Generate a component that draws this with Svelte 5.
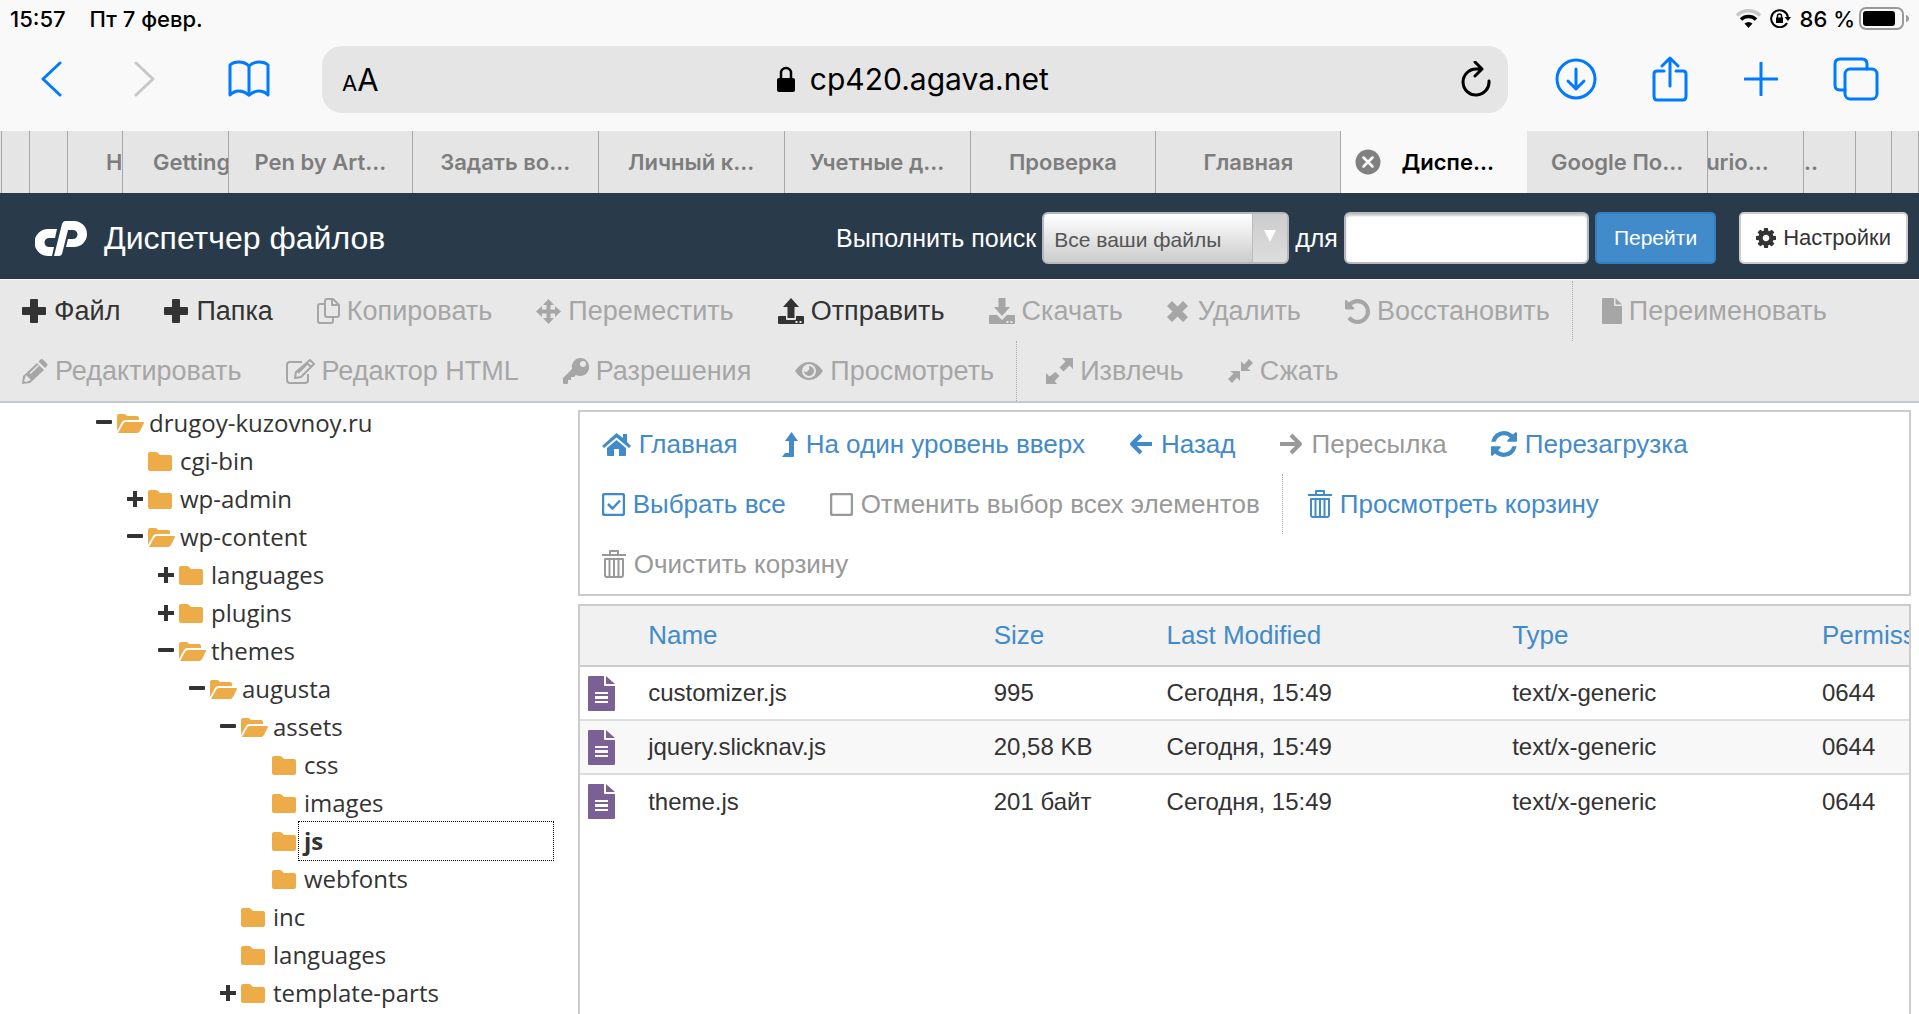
<script lang="ts">
	interface Glyph {
		w: number;
		h: number;
		box?: string;
		fill?: string;
		line?: string;
		lw?: number;
	}
	interface Action {
		icon: string;
		label: string;
		on?: boolean;
		divided?: boolean;
	}
	interface Tab {
		title: string;
		size: number;
		lead?: number;
		active?: boolean;
	}

	// Glyphs are drawn on a pixel grid of w × h unless they bring their own box.
	const glyphs: Record<string, Glyph> = {
		plus: { w: 25, h: 24, fill: 'M9 0h6q1 0 1 1v7h7q1 0 1 1v6q0 1-1 1h-7v7q0 1-1 1H9q-1 0-1-1v-7H1q-1 0-1-1V9q0-1 1-1h7V1q0-1 1-1z' },
		copy: {
			w: 23,
			h: 26,
			line: 'M15 1v6h7M10 1h6l6 6v10q0 2-2 2H10q-2 0-2-2V3q0-2 2-2zM8 6H3Q1 6 1 8v15q0 2 2 2h11q2 0 2-2v-4',
			lw: 2
		},
		move: {
			w: 25,
			h: 25,
			fill: 'M12.5 0l5.5 6h-3.5v4.5H19V7l6 5.5-6 5.5v-3.5h-4.5V19H18l-5.5 6L7 19h3.5v-4.5H6V18l-6-5.5L6 7v3.5h4.5V6H7z'
		},
		upload: {
			w: 26,
			h: 26,
			fill: 'M13 0l8 9h-4.5v11h-7V9H5zM1 18h7v3q0 1 1 1h8q1 0 1-1v-3h7q1 0 1 1v6q0 1-1 1H1q-1 0-1-1v-6q0-1 1-1zm16.5 5v2h2v-2zm4 0v2h2v-2z'
		},
		download: {
			w: 26,
			h: 26,
			fill: 'M9.5 0h7v9H21l-8 9-8-9h4.5zM1 17h7l5 5 5-5h7q1 0 1 1v7q0 1-1 1H1q-1 0-1-1v-7q0-1 1-1zm16.5 6v2h2v-2zm4 0v2h2v-2z'
		},
		cross: { w: 24, h: 21, box: '0 0 24 21', fill: 'M5 0l5.5 5.5L16 0l5 5-5.5 5.5L21 16l-5 5-5.5-5.5L5 21l-5-5 5.5-5.5L0 5z' },
		undo: {
			w: 25,
			h: 25,
			box: '128 128 1536 1536',
			fill: 'M1664 896q0 156-61 298t-164 245-245 164-298 61q-172 0-327-72.5t-264-204.5q-7-10-6.5-22.5t8.5-20.5l137-138q10-9 25-9 16 2 23 12 73 95 179 147t225 52q104 0 198.5-40.5t163.5-109.5 109.5-163.5 40.5-198.5-40.5-198.5-109.5-163.5-163.5-109.5-198.5-40.5q-98 0-188 35.5t-160 101.5l137 138q31 30 14 69-17 40-59 40h-448q-26 0-45-19t-19-45v-448q0-42 40-59 39-17 69 14l130 129q107-101 244.5-156.5t284.5-55.5q156 0 298 61t245 164 164 245 61 298z'
		},
		file: { w: 20, h: 26, fill: 'M1 0h11v7q0 1 1 1h7v17q0 1-1 1H1q-1 0-1-1V1q0-1 1-1zM13.5 0 20 6.5h-6.5z' },
		pencil: {
			w: 26,
			h: 25,
			fill: 'M15 4l7 7L8 24l-8 1 1-8zM4 16l-2 6 2 1 5-2zM7.5 14l1 1L17 7l-1-1zM16.5 2.5l2-2q1-1 2.5 0l4 4q1 1 0 2.5l-2 2z'
		},
		edit: {
			w: 29,
			h: 26,
			line: 'M16 4H4Q1 4 1 7v15q0 3 3 3h15q3 0 3-3v-6M24 2l4 4-13 13-6 1 1-6zM21 5l4 4M12 15l10-10',
			lw: 2
		},
		key: {
			w: 26,
			h: 26,
			fill: 'M17 0a9 9 0 1 1-4 17l-2 2H8v3H5v3q0 1-1 1H1q-1 0-1-1v-5l9-9a9 9 0 0 1 8-11zm3 3a3 3 0 1 0 0 6 3 3 0 0 0 0-6z'
		},
		eye: {
			w: 28,
			h: 18,
			fill: 'M0 9Q6 0 14 0t14 9q-6 9-14 9T0 9zM14 2a7 7 0 1 0 0 14 7 7 0 0 0 0-14zm0 2a5 5 0 1 1-5 5q2 2 4 0t1-5z'
		},
		expand: { w: 27, h: 26, fill: 'M16 0h11v11l-3.5-3.5-6 6-4-4 6-6zM9.5 14l4 4-5 5 2.5 3H0V15l3.5 3.5z' },
		compress: { w: 25, h: 24, fill: 'M21 0l4 4-5.5 5.5L23 12H13V2l3 3.5zM2 12h10v10l-3-3.5L4 24l-4-4 5.5-5.5z' },
		home: {
			w: 29,
			h: 23,
			fill: 'M14.5 7 24 15v7q0 1-1 1h-6v-7h-5v7H6q-1 0-1-1v-7zM14.5 0 21 5V1h4v8l4 4-2 2L14.5 4.5 2 15l-2-2z'
		},
		up: { w: 16, h: 25, fill: 'M9.5 0l6.5 9h-4v15q0 1-1 1H0l3-4h4V9H3z' },
		back: { w: 24, h: 22, line: 'M12 2l-9 9 9 9M4 11h19', lw: 4 },
		forward: { w: 24, h: 22, line: 'M12 2l9 9-9 9M1 11h19', lw: 4 },
		refresh: {
			w: 26,
			h: 26,
			box: '128 128 1536 1536',
			fill: 'M1639 1056q0 5-1 7-64 268-268 434.5t-478 166.5q-146 0-282.5-55t-243.5-157l-129 129q-19 19-45 19t-45-19-19-45v-448q0-26 19-45t45-19h448q26 0 45 19t19 45-19 45l-137 137q71 66 161 102t187 36q134 0 250-65t186-179q11-17 53-117 8-23 30-23h192q13 0 22.5 9.5t9.5 22.5zm25-800v448q0 26-19 45t-45 19h-448q-26 0-45-19t-19-45 19-45l138-138q-148-137-349-137-134 0-250 65t-186 179q-11 17-53 117-8 23-30 23h-199q-13 0-22.5-9.5t-9.5-22.5v-7q65-268 270-434.5t480-166.5q146 0 284 55.5t245 156.5l130-129q19-19 45-19t45 19 19 45z'
		},
		checked: { w: 23, h: 23, line: 'M3 1h17q2 0 2 2v17q0 2-2 2H3q-2 0-2-2V3q0-2 2-2zM6 11l4.5 4.5L18 7.5', lw: 2.5 },
		unchecked: { w: 23, h: 23, line: 'M3 1h17q2 0 2 2v17q0 2-2 2H3q-2 0-2-2V3q0-2 2-2z', lw: 2.5 },
		trash: { w: 24, h: 28, line: 'M0 5h24M8 5V1h8v4M3 9h18v16q0 2-2 2H5q-2 0-2-2zM7.5 9v18M12 9v18M16.5 9v18', lw: 2 },
		gear: {
			w: 20,
			h: 20,
			box: '128 128 1536 1536',
			fill: 'M1152 896q0-106-75-181t-181-75-181 75-75 181 75 181 181 75 181-75 75-181zm512-109v222q0 12-8 23t-20 13l-185 28q-19 54-39 91 35 50 107 138 10 12 10 25t-9 23q-27 37-99 108t-94 71q-12 0-26-9l-138-108q-44 23-91 38-16 136-29 186-7 28-36 28h-222q-14 0-24.5-8.5t-11.5-21.5l-28-184q-49-16-90-37l-141 107q-10 9-25 9-14 0-25-11-126-114-165-168-7-10-7-23 0-12 8-23 15-21 51-66.5t54-70.5q-27-50-41-99l-183-27q-13-2-21-12.5t-8-23.5v-222q0-12 8-23t19-13l186-28q14-46 39-92-40-57-107-138-10-12-10-24 0-10 9-23 26-36 98.5-107.5t94.5-71.5q13 0 26 10l138 107q44-23 91-38 16-136 29-186 7-28 36-28h222q14 0 24.5 8.5t11.5 21.5l28 184q49 16 90 37l142-107q9-9 24-9 13 0 25 10 129 119 165 170 7 8 7 22 0 12-8 23-15 21-51 66.5t-54 70.5q26 50 41 98l183 28q13 2 21 12.5t8 23.5z'
		},
		folder: { w: 24, h: 19, fill: 'M2 0h6q1 0 2 1l2 2h10q2 0 2 2v12q0 2-2 2H2q-2 0-2-2V2q0-2 2-2z' },
		folderOpen: {
			w: 27,
			h: 19,
			fill: 'M2 0h5q2 0 3 2h10q2 0 2 2v2H9Q6 6 5 8l-5 9V2q0-2 2-2zM9 8h17q1 0 1 1l-4 8q-1 2-3 2H1l5-9q1-2 3-2z'
		},
		expandNode: { w: 16, h: 16, fill: 'M6 0h4v6h6v4h-6v6H6v-6H0V6h6z' },
		collapseNode: { w: 16, h: 16, fill: 'M1 5h14q1 0 1 1v2q0 1-1 1H1q-1 0-1-1V6q0-1 1-1z' },
		doc: {
			w: 27,
			h: 35,
			fill: 'M1 0h15v9q0 1 1 1h10v24q0 1-1 1H1q-1 0-1-1V1q0-1 1-1zM18 0l9 8h-9zM7 16v2h13v-2zm0 4v3h13v-3zm0 5v2h13v-2z'
		}
	};

	const tabs: Tab[] = [
		{ title: '', size: 1 },
		{ title: '', size: 27 },
		{ title: '', size: 37 },
		{ title: 'H', size: 54, lead: 38 },
		{ title: 'Getting', size: 105, lead: 30 },
		{ title: 'Pen by Art...', size: 183 },
		{ title: 'Задать во...', size: 185 },
		{ title: 'Личный к...', size: 185 },
		{ title: 'Учетные д...', size: 185 },
		{ title: 'Проверка', size: 185 },
		{ title: 'Главная', size: 184 },
		{ title: 'Диспе...', size: 186, active: true },
		{ title: 'Google По...', size: 180 },
		{ title: 'urio...', size: 95, lead: -2 },
		{ title: '..', size: 51, lead: 0 },
		{ title: '', size: 35 },
		{ title: '', size: 26 }
	];

	const toolbar: Action[] = [
		{ icon: 'plus', label: 'Файл', on: true },
		{ icon: 'plus', label: 'Папка', on: true },
		{ icon: 'copy', label: 'Копировать' },
		{ icon: 'move', label: 'Переместить' },
		{ icon: 'upload', label: 'Отправить', on: true },
		{ icon: 'download', label: 'Скачать' },
		{ icon: 'cross', label: 'Удалить' },
		{ icon: 'undo', label: 'Восстановить' },
		{ icon: 'file', label: 'Переименовать', divided: true },
		{ icon: 'pencil', label: 'Редактировать' },
		{ icon: 'edit', label: 'Редактор HTML' },
		{ icon: 'key', label: 'Разрешения' },
		{ icon: 'eye', label: 'Просмотреть' },
		{ icon: 'expand', label: 'Извлечь', divided: true },
		{ icon: 'compress', label: 'Сжать' }
	];

	const listActions: Action[] = [
		{ icon: 'home', label: 'Главная', on: true },
		{ icon: 'up', label: 'На один уровень вверх', on: true },
		{ icon: 'back', label: 'Назад', on: true },
		{ icon: 'forward', label: 'Пересылка' },
		{ icon: 'refresh', label: 'Перезагрузка', on: true },
		{ icon: 'checked', label: 'Выбрать все', on: true },
		{ icon: 'unchecked', label: 'Отменить выбор всех элементов' },
		{ icon: 'trash', label: 'Просмотреть корзину', on: true, divided: true },
		{ icon: 'trash', label: 'Очистить корзину' }
	];

	const tree = [
		{ name: 'drugoy-kuzovnoy.ru', depth: 0, state: 'open' },
		{ name: 'cgi-bin', depth: 1, state: 'leaf' },
		{ name: 'wp-admin', depth: 1, state: 'closed' },
		{ name: 'wp-content', depth: 1, state: 'open' },
		{ name: 'languages', depth: 2, state: 'closed' },
		{ name: 'plugins', depth: 2, state: 'closed' },
		{ name: 'themes', depth: 2, state: 'open' },
		{ name: 'augusta', depth: 3, state: 'open' },
		{ name: 'assets', depth: 4, state: 'open' },
		{ name: 'css', depth: 5, state: 'leaf' },
		{ name: 'images', depth: 5, state: 'leaf' },
		{ name: 'js', depth: 5, state: 'leaf' },
		{ name: 'webfonts', depth: 5, state: 'leaf' },
		{ name: 'inc', depth: 4, state: 'leaf' },
		{ name: 'languages', depth: 4, state: 'leaf' },
		{ name: 'template-parts', depth: 4, state: 'closed' }
	];

	const columns = ['Name', 'Size', 'Last Modified', 'Type', 'Permissions'];
	const files = [
		['customizer.js', '995', 'Сегодня, 15:49', 'text/x-generic', '0644'],
		['jquery.slicknav.js', '20,58 KB', 'Сегодня, 15:49', 'text/x-generic', '0644'],
		['theme.js', '201 байт', 'Сегодня, 15:49', 'text/x-generic', '0644']
	];

	let selected = $state(11);
	let query = $state('');
</script>

{#snippet icon(name: string)}
	{@const g = glyphs[name]}
	<svg width={g.w} height={g.h} viewBox={g.box ?? `0 0 ${g.w} ${g.h}`} aria-hidden="true">
		{#if g.fill}
			<path d={g.fill} fill="currentColor" fill-rule="evenodd" />
		{/if}
		{#if g.line}
			<path d={g.line} fill="none" stroke="currentColor" stroke-width={g.lw} stroke-linejoin="round" />
		{/if}
	</svg>
{/snippet}

{#snippet actionButton(action: Action)}
	<button type="button" class="action" class:divided={action.divided} disabled={!action.on}>
		{@render icon(action.icon)}
		<span>{action.label}</span>
	</button>
{/snippet}

<div class="screen">
	<header class="browser">
		<div class="status">
			<span>15:57</span>
			<span>Пт 7 февр.</span>
			<span class="device">
				<svg width="25" height="19" viewBox="0 0 25 19" aria-hidden="true">
					<path d="M1 6.5a16.5 16.5 0 0 1 23 0" fill="none" stroke="#c8c8c8" stroke-width="3.5" />
					<path d="M5 10.5a11 11 0 0 1 15 0" fill="none" stroke="#000" stroke-width="3.5" />
					<path d="M12.5 19 8.5 14.5a6 6 0 0 1 8 0z" />
				</svg>
				<svg width="21" height="19" viewBox="0 0 21 19" aria-hidden="true">
					<path d="M17 14a8.5 8.5 0 1 1 1-6" fill="none" stroke="#000" stroke-width="2" />
					<path d="M14.5 8h6.5l-3 4z" />
					<path d="M6 8.5h7v5.5H6z" />
					<path d="M7.5 9V7a2 2 0 0 1 4 0v2" fill="none" stroke="#000" stroke-width="1.5" />
				</svg>
				<span>86 %</span>
				<svg class="battery" width="50" height="23" viewBox="0 0 50 23" aria-hidden="true">
					<rect x="1" y="1" width="43" height="21" rx="6" fill="none" stroke="#999" stroke-width="2" />
					<rect x="4" y="4" width="32" height="15" rx="3" />
					<path d="M47 8q3 1 3 3.5T47 15z" fill="#999" />
				</svg>
			</span>
		</div>

		<div class="nav">
			<div class="nav-left">
				<button type="button" aria-label="Назад">
					<svg width="22" height="36" viewBox="0 0 22 36"><path d="M20 2 3 18l17 16" /></svg>
				</button>
				<button type="button" aria-label="Вперед" disabled>
					<svg width="22" height="36" viewBox="0 0 22 36"><path d="M2 2l17 16L2 34" /></svg>
				</button>
				<button type="button" aria-label="Закладки">
					<svg width="42" height="38" viewBox="0 0 42 38">
						<path d="M21 6Q17 2 11 2T2 5v30q4-4 9-4t10 4q5-4 10-4t9 4V5q-3-3-9-3T21 6z" />
						<path d="M21 6v29" />
					</svg>
				</button>
			</div>

			<div class="address">
				<button type="button" class="aa" aria-label="Параметры страницы"><small>A</small>A</button>
				<span class="host">
					<svg width="18" height="26" viewBox="0 0 18 26" aria-hidden="true">
						<rect y="12" width="18" height="14" rx="2" />
						<path d="M4 13V7a5 5 0 0 1 10 0v6" fill="none" stroke="#000" stroke-width="2.5" />
					</svg>
					cp420.agava.net
				</span>
				<button type="button" class="reload" aria-label="Обновить">
					<svg width="30" height="36" viewBox="0 0 30 36">
						<path d="M28 20a13 13 0 1 1-13-12h6M14 1l7 7-7 7" />
					</svg>
				</button>
			</div>

			<div class="nav-right">
				<button type="button" aria-label="Загрузки">
					<svg width="42" height="42" viewBox="0 0 42 42">
						<circle cx="21" cy="21" r="19" />
						<path d="M21 11v19M13 23l8 8 8-8" />
					</svg>
				</button>
				<button type="button" aria-label="Поделиться">
					<svg width="38" height="46" viewBox="0 0 38 46">
						<path d="M12 15H5q-3 0-3 3v22q0 4 3 4h26q3 0 3-4V18q0-3-3-3h-7M18 30V3M10 10l8-8 8 8" />
					</svg>
				</button>
				<button type="button" aria-label="Новая вкладка">
					<svg width="34" height="34" viewBox="0 0 34 34"><path d="M17 1v32M1 17h32" /></svg>
				</button>
				<button type="button" aria-label="Вкладки">
					<svg width="46" height="44" viewBox="0 0 46 44">
						<rect x="12" y="12" width="32" height="30" rx="5" />
						<path d="M12 33H7q-5 0-5-5V7q0-5 5-5h22q5 0 5 5v5" />
					</svg>
				</button>
			</div>
		</div>

		<nav class="tabs" aria-label="Вкладки">
			{#each tabs as tab}
				<div
					class="tab"
					class:active={tab.active}
					class:stacked={tab.lead !== undefined || !tab.title}
					style:flex-grow={tab.size}
				>
					{#if tab.active}
						<button type="button" aria-label="Закрыть вкладку">
							<svg width="26" height="26" viewBox="0 0 26 26">
								<circle cx="13" cy="13" r="12.5" fill="#808080" />
								<path d="M8.5 8.5l9 9M17.5 8.5l-9 9" stroke="#fff" stroke-width="2.5" stroke-linecap="round" />
							</svg>
						</button>
					{/if}
					<span style:margin-left={tab.lead === undefined ? undefined : `${tab.lead}px`}>{tab.title}</span>
				</div>
			{/each}
		</nav>
	</header>

	<div class="titlebar">
		<svg class="logo" width="52" height="35" viewBox="0 0 52 35" aria-label="cPanel" role="img">
			<path d="M22 8h-9a13 13 0 0 0 0 27h4l2-9h-5a4.5 4.5 0 0 1 0-9h6z" />
			<path d="M30 0h9a13 13 0 0 1 0 26h-8l2-8h5a4.5 4.5 0 0 0 0-9h-5l-6 24q-1 2-3 2h-5l8-32q1-3 3-3z" />
		</svg>
		<h1>Диспетчер файлов</h1>
		<form class="search" onsubmit={(e) => e.preventDefault()}>
			<label for="scope">Выполнить поиск</label>
			<span class="select">
				<select id="scope">
					<option>Все ваши файлы</option>
				</select>
			</span>
			<label for="query">для</label>
			<input id="query" type="text" bind:value={query} />
			<button type="submit" class="go">Перейти</button>
		</form>
		<button type="button" class="settings">
			{@render icon('gear')}
			Настройки
		</button>
	</div>

	<div class="toolbar" role="toolbar" aria-label="Файлы">
		{#each toolbar as action}
			{@render actionButton(action)}
		{/each}
	</div>

	<main>
		<aside>
			<ul>
				{#each tree as node, i}
					<li style:padding-left={`${node.depth * 31}px`}>
						{#if node.state === 'leaf'}
							<span class="toggle"></span>
						{:else}
							<button type="button" class="toggle" aria-label={node.state === 'open' ? 'Свернуть' : 'Развернуть'}>
								{@render icon(node.state === 'open' ? 'collapseNode' : 'expandNode')}
							</button>
						{/if}
						<span class="folder">{@render icon(node.state === 'open' ? 'folderOpen' : 'folder')}</span>
						<button type="button" class="name" class:selected={selected === i} onclick={() => (selected = i)}>
							{node.name}
						</button>
					</li>
				{/each}
			</ul>
		</aside>

		<section class="content">
			<div class="list-actions" role="toolbar" aria-label="Навигация">
				{#each listActions as action}
					{@render actionButton(action)}
				{/each}
			</div>
			<div class="list">
				<table>
					<colgroup>
						<col class="c-icon" />
						<col class="c-wide" />
						<col class="c-size" />
						<col class="c-wide" />
						<col class="c-type" />
						<col />
					</colgroup>
					<thead>
						<tr>
							<th></th>
							{#each columns as column}
								<th><a href="#sort">{column}</a></th>
							{/each}
						</tr>
					</thead>
					<tbody>
						{#each files as file}
							<tr>
								<td class="doc">{@render icon('doc')}</td>
								{#each file as value}
									<td>{value}</td>
								{/each}
							</tr>
						{/each}
					</tbody>
				</table>
			</div>
		</section>
	</main>
</div>

<style>
	:global(body) {
		background: #fff;
	}
	.screen {
		display: flex;
		flex-direction: column;
		min-height: 100vh;
		color: #333;
		font-family: 'Liberation Sans', Arial, sans-serif;
	}
	.screen,
	.screen * {
		box-sizing: border-box;
	}
	button,
	input,
	select {
		margin: 0;
		padding: 0;
		border: 0;
		background: none;
		color: inherit;
		font: inherit;
	}
	svg {
		display: block;
		flex: none;
	}

	/* Browser chrome */
	.browser {
		background: #f9f9f9;
		color: #000;
		font-family: Inter, Roboto, sans-serif;
	}
	.status {
		display: flex;
		align-items: center;
		gap: 24px;
		height: 37px;
		padding: 0 10px;
		font-size: 22px;
		font-weight: 500;
	}
	.device {
		display: flex;
		align-items: center;
		gap: 9px;
		margin-left: auto;
	}
	.battery {
		margin-left: -5px;
	}
	.nav {
		display: flex;
		align-items: center;
		height: 94px;
		padding: 0 40px 10px;
	}
	.nav button {
		color: #007aff;
	}
	.nav button svg {
		fill: none;
		stroke: currentColor;
		stroke-width: 3;
		stroke-linecap: round;
		stroke-linejoin: round;
	}
	.nav button:disabled {
		color: #c7c7c7;
	}
	.nav-left,
	.nav-right {
		display: flex;
		align-items: center;
		justify-content: space-between;
	}
	.nav-left {
		width: 230px;
		margin-right: 52px;
	}
	.nav-right {
		width: 324px;
		margin-left: 47px;
	}
	.address {
		display: flex;
		flex: 1;
		align-items: center;
		justify-content: space-between;
		height: 67px;
		padding: 0 17px 0 20px;
		border-radius: 20px;
		background: #e5e5e5;
	}
	.nav .aa,
	.nav .reload {
		color: #000;
	}
	.aa {
		font-size: 31px;
	}
	.aa small {
		font-size: 22px;
	}
	.host {
		display: flex;
		align-items: center;
		gap: 15px;
		padding-right: 14px;
		font-size: 30px;
	}
	.tabs {
		display: flex;
		height: 62px;
	}
	.tab {
		display: flex;
		flex: 1 1 0;
		align-items: center;
		justify-content: center;
		min-width: 0;
		overflow: hidden;
		border-right: 1px solid #a9a9a9;
		background: #e5e5e5;
		color: #7d7d7d;
		font-size: 22px;
		font-weight: 600;
		white-space: nowrap;
	}
	.tab.stacked {
		justify-content: flex-start;
	}
	.tab.active {
		gap: 21px;
		border-right: 0;
		background: #f9f9f9;
		color: #000;
	}
	.tab.active span {
		margin-right: 20px;
	}

	/* File manager header */
	.titlebar {
		display: flex;
		align-items: center;
		height: 86px;
		padding: 4px 11px 0 35px;
		background: #293a4a;
		color: #fff;
	}
	.logo {
		fill: #fff;
	}
	h1 {
		margin: 0 auto 0 17px;
		font-size: 32px;
		font-weight: 400;
	}
	.search {
		display: flex;
		align-items: center;
		gap: 6px;
		margin-right: 23px;
		font-size: 25px;
	}
	.select {
		position: relative;
		width: 247px;
		height: 52px;
	}
	.select select {
		width: 100%;
		height: 100%;
		padding: 2px 44px 0 10px;
		border: 2px solid #b5b9bd;
		border-radius: 6px;
		background: linear-gradient(#fff, #ccc);
		color: #555;
		font-size: 21px;
		appearance: none;
	}
	.select::before {
		content: '';
		position: absolute;
		top: 2px;
		right: 2px;
		bottom: 2px;
		width: 34px;
		border-left: 1px solid #bbb;
		border-radius: 0 4px 4px 0;
		background: linear-gradient(#ccc, #ddd);
		pointer-events: none;
	}
	.select::after {
		content: '';
		position: absolute;
		top: 18px;
		right: 13px;
		border: 6px solid transparent;
		border-top: 12px solid #fff;
		border-bottom: 0;
		pointer-events: none;
	}
	.search input {
		width: 245px;
		height: 52px;
		padding: 0 12px;
		border: 2px solid #b5b9bd;
		border-radius: 6px;
		background: #fff;
		box-shadow: inset 0 2px 2px #ccc;
		color: #333;
	}
	.go,
	.settings {
		height: 52px;
		border-radius: 5px;
	}
	.go {
		padding: 0 17px;
		border: 2px solid #357ebd;
		background: #428bca;
		color: #fff;
		font-size: 21px;
	}
	.settings {
		display: flex;
		align-items: center;
		gap: 7px;
		padding: 0 15px;
		border: 2px solid #ccc;
		background: #fff;
		color: #333;
		font-size: 22px;
	}

	/* Action rows */
	.toolbar,
	.list-actions {
		display: flex;
		flex-wrap: wrap;
	}
	.toolbar {
		padding-top: 1px;
		border-top: 1px solid #f5f5f5;
		border-bottom: 2px solid #c3c8ce;
		background: #e8e8e8;
		color: #333;
		font-size: 27px;
	}
	.action {
		display: flex;
		align-items: center;
		gap: 7px;
		height: 60px;
		padding: 0 22px;
		white-space: nowrap;
	}
	.action:disabled {
		color: #a6a6a6;
	}
	.action.divided {
		padding-left: 29px;
		border-left: 1px dotted #aaa;
	}
	.list-actions {
		padding-top: 2px;
		border: 2px solid #ccc;
		color: #428bca;
		font-size: 26px;
	}
	.list-actions .action {
		gap: 8px;
	}
	.list-actions .action:disabled {
		color: #999;
	}
	.list-actions .divided {
		padding-left: 25px;
	}

	main {
		display: flex;
		flex: 1;
	}
	aside {
		flex: 0 0 30%;
		padding: 1px 23px 0 96px;
	}
	ul {
		margin: 0;
		padding: 0;
		list-style: none;
	}
	li {
		display: flex;
		align-items: center;
		height: 38px;
	}
	.toggle {
		flex: none;
		width: 21px;
	}
	.folder {
		width: 27px;
		color: #eeac49;
	}
	.name {
		flex: 1;
		height: 38px;
		padding: 0 5px;
		font-family: 'Open Sans', 'Noto Sans', sans-serif;
		font-size: 24px;
		line-height: 36px;
		text-align: left;
		white-space: nowrap;
	}
	.name.selected {
		outline: 1px dotted #000;
		font-weight: 700;
	}

	.content {
		display: flex;
		flex: 1;
		flex-direction: column;
		gap: 8px;
		min-width: 0;
		padding: 7px 8px 0 2px;
	}
	.list {
		flex: 1;
		overflow: hidden;
		border: 2px solid #ccc;
		border-bottom: 0;
	}
	table {
		width: 100%;
		border-collapse: collapse;
		table-layout: fixed;
		font-size: 24px;
	}
	.c-icon {
		width: 5%;
	}
	.c-wide {
		width: 26%;
	}
	.c-size {
		width: 13%;
	}
	.c-type {
		width: 23.3%;
	}
	th,
	td {
		padding: 0 0 0 2px;
		text-align: left;
		white-space: nowrap;
	}
	th {
		height: 60px;
		border-bottom: 2px solid #ccc;
		background: #f1f1f1;
		font-size: 26px;
		font-weight: 400;
	}
	th a {
		color: #428bca;
		text-decoration: none;
	}
	td {
		height: 54px;
		border-bottom: 2px solid #ddd;
	}
	tbody tr:nth-child(even) {
		background: #f8f8f8;
	}
	tbody tr:last-child td {
		border-bottom: 0;
	}
	td.doc {
		padding-left: 8px;
		color: #7b6096;
	}
</style>
